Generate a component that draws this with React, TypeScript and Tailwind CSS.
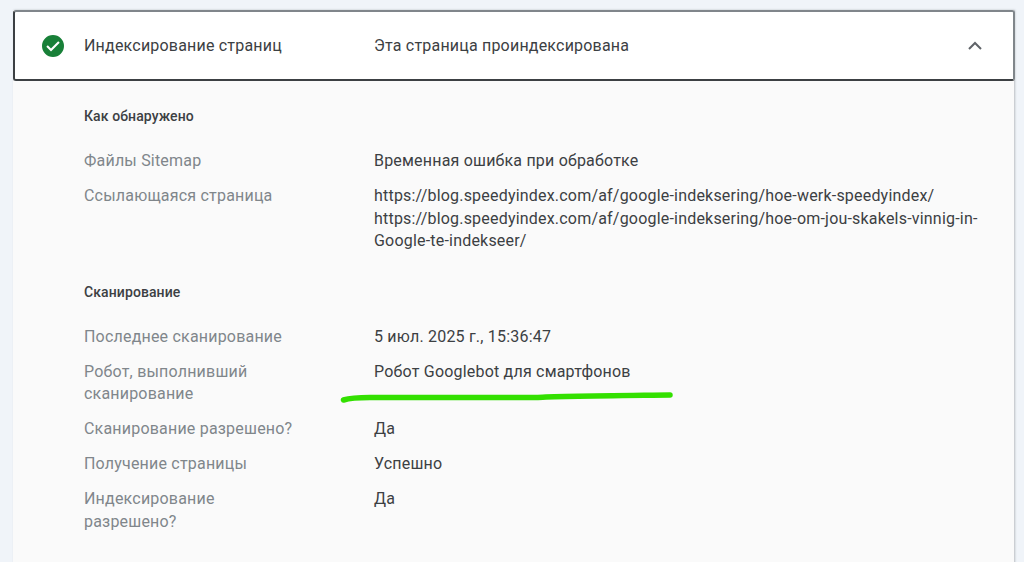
const rows1 = [
  {
    label: "Файлы Sitemap",
    value: ["Временная ошибка при обработке"],
  },
  {
    label: "Ссылающаяся страница",
    value: [
      "https://blog.speedyindex.com/af/google-indeksering/hoe-werk-speedyindex/",
      "https://blog.speedyindex.com/af/google-indeksering/hoe-om-jou-skakels-vinnig-in-Google-te-indekseer/",
    ],
  },
];

const rows2 = [
  { label: "Последнее сканирование", value: ["5 июл. 2025 г., 15:36:47"] },
  { label: "Робот, выполнивший сканирование", value: ["Робот Googlebot для смартфонов"] },
  { label: "Сканирование разрешено?", value: ["Да"] },
  { label: "Получение страницы", value: ["Успешно"] },
  { label: "Индексирование разрешено?", value: ["Да"] },
];

function Row({ label, value }: { label: string; value: string[] }) {
  return (
    <div className="flex py-[6.25px] text-[16px] leading-[22.5px] tracking-[0.2px]">
      <div className="w-[290px] shrink-0 pr-[66px] text-[#80868b]">{label}</div>
      <div className="min-w-0 flex-1 text-[#3c4043]">
        {value.map((v) => (
          <div key={v} className="break-words">
            {v}
          </div>
        ))}
      </div>
    </div>
  );
}

export default function App() {
  return (
    <div className="relative h-[562px] w-[1024px] overflow-hidden bg-[#f0f4f9] font-['Roboto',sans-serif]">
      <div className="ml-[13px] mt-[10px] h-[600px] w-[1001px] bg-[#fafafa] shadow-[1px_0_2px_rgba(60,64,67,0.3)]">
        <div className="flex h-[71px] w-[1002px] items-center rounded-[3px] border-2 border-t-[#80868b] border-r-[#80868b] border-b-[#3c4043] border-l-[#3c4043] bg-white pl-[26px] pr-[26px] text-[16px] tracking-[0.2px] text-[#3c4043]">
          <svg width="24" height="24" viewBox="0 0 24 24" className="shrink-0">
            <path
              fill="#188038"
              d="M12 1a11 11 0 1 0 0 22 11 11 0 0 0 0-22zm-2 16.4-4.7-4.7 1.5-1.5 3.2 3.2 7.2-7.2 1.5 1.5L10 17.4z"
            />
          </svg>
          <div className="ml-[19px] w-[290px] shrink-0">Индексирование страниц</div>
          <div className="flex-1">Эта страница проиндексирована</div>
          <svg width="24" height="24" viewBox="0 0 24 24" fill="none" stroke="#5f6368" strokeWidth="2" className="shrink-0">
            <path d="M6 15l6-6 6 6" />
          </svg>
        </div>
        <div className="pl-[71px] pr-[24px]">
          <div className="pt-[26px] pb-[19px] text-[14px] font-medium leading-[18px] tracking-[0.1px] text-[#3c4043]">Как обнаружено</div>
          {rows1.map((r) => (
            <Row key={r.label} {...r} />
          ))}
          <div className="pt-[24px] pb-[18.5px] text-[14px] font-medium leading-[18px] tracking-[0.1px] text-[#3c4043]">Сканирование</div>
          {rows2.map((r) => (
            <Row key={r.label} {...r} />
          ))}
        </div>
      </div>
      <svg className="absolute left-[340px] top-[388px]" width="334" height="16" viewBox="0 0 334 16" fill="none">
        <path
          d="M3.5 12C10 10 20 9.5 30 9.5C90 9.5 150 9.8 198 9.5C215 8 290 7.5 330 7"
          stroke="#33e000"
          strokeWidth="5.5"
          strokeLinecap="round"
        />
      </svg>
    </div>
  );
}
